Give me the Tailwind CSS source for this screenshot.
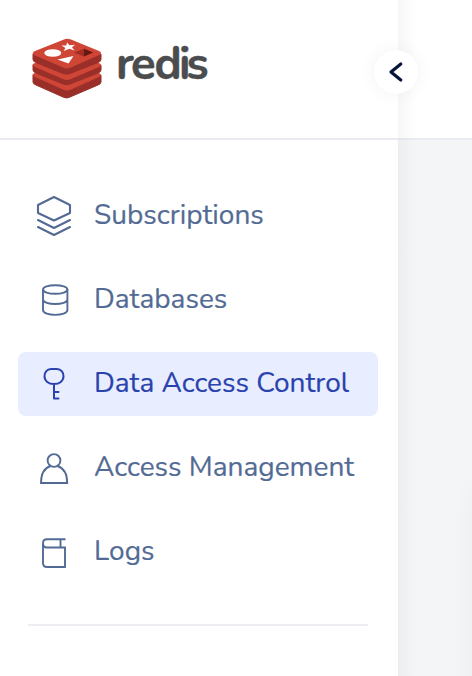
<!DOCTYPE html>
<html lang="en">
<head>
<meta charset="utf-8">
<title>Redis</title>
<script src="https://cdn.jsdelivr.net/npm/@tailwindcss/browser@4"></script>
</head>
<body class="h-[676px] w-[472px] overflow-hidden bg-white font-['Nunito','Lato',sans-serif]">
<div class="relative flex h-full">
  <aside class="flex w-[398px] shrink-0 flex-col bg-white">
    <header class="flex h-[140px] shrink-0 items-start border-b-2 border-[#e9ebf1] pt-[27px] pl-[30px]">
      <svg class="h-[84px] w-[194px] overflow-visible" viewBox="30 27 194 84" role="img" aria-label="redis">
        <g stroke-linejoin="round">
          <path d="M33 75L67 88L101 75V82Q101 84 98 85L70 97Q67 99 63 97L36 85Q33 84 33 82Z" fill="#9a2f29" stroke="#9a2f29" stroke-width="1"/>
          <path d="M32.500 75Q32 74 35 73L64 60H70L99 73Q103 75 99 77L71 89.500Q67 91.500 63 89.500L35 77Z" fill="#cf4536"/>
          <path d="M33 65L67 78L101 65V70Q101 72 98 73L70 84Q67 85.500 63 84L36 73Q33 72 33 70Z" fill="#9a2f29" stroke="#9a2f29" stroke-width="1"/>
          <path d="M32.500 65Q32 64 35 63L64 50H70L99 63Q103 65 99 67L71 79Q67 81 63 79L35 67Z" fill="#cf4536"/>
          <path d="M33 54L67 67L101 54V59.500Q101 61.500 98 62.500L70 73.500Q67 75 63 73.500L36 62.500Q33 61.500 33 59.500Z" fill="#9a2f29" stroke="#9a2f29" stroke-width="1"/>
          <path d="M34 55Q31 53 35 51L64 39.500Q67 38 71 39.500L99 51Q103 53 99 55L71 67.500Q67 69.500 63 67.500Z" fill="#cf4536"/>
        </g>
        <ellipse cx="52.800" cy="53" rx="8.500" ry="3.800" fill="#fff"/>
        <path d="M67 42.500L69.500 45.200L75 44.700L72 47.300L74.500 50.500L69.500 48.800L63.500 51L65.500 48L61.500 45.500L66.300 45.500Z" fill="#fff"/>
        <path d="M57.500 59.500L73.500 56L68.500 63.500Z" fill="#fff"/>
        <path d="M74 52.500L84 48.800L93 52.500L84 56.500Z" fill="#a32d25"/>
        <path d="M84 48.800L93 52.500L84 56.500Z" fill="#661812"/>
        <text x="116 131 154.500 179 186.500" y="79.300" font-family="Nunito, Lato, sans-serif" font-size="45.500" font-weight="700" fill="#4b4c4e" stroke="#4b4c4e" stroke-width="0.400">redis</text>
      </svg>
    </header>
    <nav class="flex flex-col gap-5 px-[18px] pt-[44px] text-[28px] leading-[62px] text-[#536b94] [-webkit-text-stroke:0.2px_currentColor]">
      <a class="flex h-16 w-[360px] items-center rounded-lg pl-[16px]">
        <svg class="mr-5 size-10 shrink-0" viewBox="34 196 40 40" fill="none" stroke="currentColor" stroke-width="2.100" stroke-linejoin="round" stroke-linecap="round"><path d="M54 197L70 205V213L54 220.500L38 213V205ZM38 220L54 228L70 220M38 227L54 235L70 227"/></svg>
        <span class="pb-0.5 whitespace-nowrap">Subscriptions</span>
      </a>
      <a class="flex h-16 w-[360px] items-center rounded-lg pl-[16px]">
        <svg class="mr-5 size-10 shrink-0" viewBox="34 280 40 40" fill="none" stroke="currentColor" stroke-width="1.900"><ellipse cx="55.200" cy="289.500" rx="12.200" ry="4.300"/><path d="M43 289.500V310C43 316.500 67.400 316.500 67.400 310V289.500M43 299.500C43 305.500 67.400 305.500 67.400 299.500"/></svg>
        <span class="pb-0.5 whitespace-nowrap">Databases</span>
      </a>
      <a class="flex h-16 w-[360px] items-center rounded-lg bg-[#e8eeff] pl-[16px] text-[#2a42ad]">
        <svg class="mr-5 size-10 shrink-0" viewBox="34 364 40 40" fill="none" stroke="currentColor" stroke-width="2" stroke-linecap="round" stroke-linejoin="round"><path d="M51 369H57C61 369 63.500 372.500 63.500 376.300C63.500 381 59.500 384 54 384S44.500 381 44.500 376.300C44.500 372.500 47 369 51 369ZM54 384V398.500H58.500M54 392H58.500"/></svg>
        <span class="pb-0.5 whitespace-nowrap">Data Access Control</span>
      </a>
      <a class="flex h-16 w-[360px] items-center rounded-lg pl-[16px]">
        <svg class="mr-5 size-10 shrink-0" viewBox="34 448 40 40" fill="none" stroke="currentColor" stroke-width="1.900"><circle cx="54" cy="460.500" r="6.400"/><path d="M50.500 466C44.500 468 41 474 41 483H67.200C67.200 474 63.500 468 57.500 466"/></svg>
        <span class="pb-0.5 whitespace-nowrap">Access Management</span>
      </a>
      <a class="flex h-16 w-[360px] items-center rounded-lg pl-[16px]">
        <svg class="mr-5 size-10 shrink-0" viewBox="34 532 40 40" fill="none" stroke="currentColor" stroke-width="1.900"><path d="M65.500 539.200H47Q43 539.200 43 543.200V563Q43 567 47 567H65V547.500H47Q43 547.500 43 543.500M60.500 539V547.500"/></svg>
        <span class="pb-0.5 whitespace-nowrap">Logs</span>
      </a>
    </nav>
    <div class="mt-10 mr-[30px] ml-[28px] h-0.5 bg-[#edeef2]"></div>
  </aside>
  <main class="flex flex-1 flex-col">
    <div class="h-[140px] shrink-0 border-b-2 border-[#e9ebf1] bg-white"></div>
    <div class="relative flex-1 overflow-hidden bg-[#f4f5f7]">
      <div class="absolute top-[352px] left-[80px] h-[260px] w-20 shadow-[0_0_30px_rgba(0,0,0,0.06)]"></div>
    </div>
  </main>
  <div class="absolute inset-y-0 left-[398px] w-[18px] bg-linear-to-r from-black/[0.03] to-transparent"></div>
  <button class="absolute top-[50px] left-[374px] flex size-11 items-center justify-center rounded-full bg-white shadow-[0_0_20px_rgba(0,0,0,0.05)]" aria-label="Collapse">
    <svg class="size-11" viewBox="374 50 44 44" fill="none" stroke="#07163a" stroke-width="3.200" stroke-linecap="round" stroke-linejoin="round"><path d="M400.800 64L391 72L400.800 80"/></svg>
  </button>
</div>
</body>
</html>
